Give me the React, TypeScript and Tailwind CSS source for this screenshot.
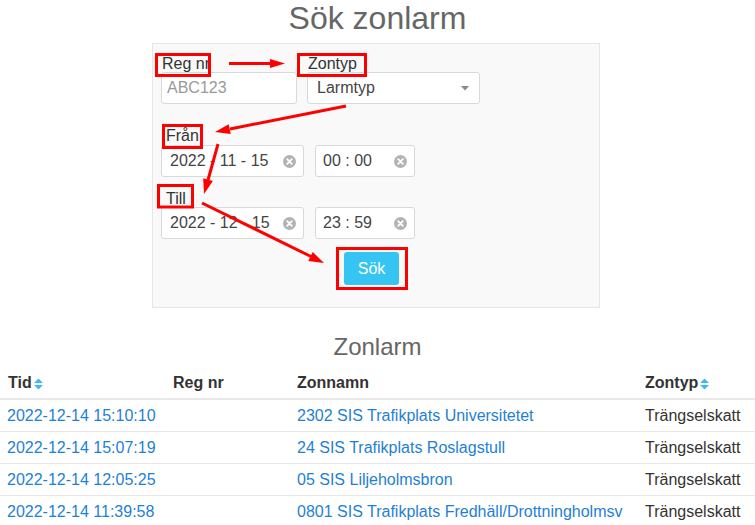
import React from "react";

const ClearIcon = () => (
  <svg width="13" height="13" viewBox="0 0 13 13" className="shrink-0">
    <circle cx="6.5" cy="6.5" r="6.5" fill="#b3b3b3" />
    <path d="M4.2 4.2 L8.8 8.8 M8.8 4.2 L4.2 8.8" stroke="#fff" strokeWidth="1.8" strokeLinecap="round" />
  </svg>
);

const SortIcon = () => (
  <svg width="9" height="12" viewBox="0 0 9 12" className="ml-[2px] inline-block">
    <polygon points="0,5 4.5,0.5 9,5" fill="#40b9ec" />
    <polygon points="0,7 4.5,11.5 9,7" fill="#40b9ec" />
  </svg>
);

const rows = [
  ["2022-12-14 15:10:10", "", "2302 SIS Trafikplats Universitetet", "Trängselskatt"],
  ["2022-12-14 15:07:19", "", "24 SIS Trafikplats Roslagstull", "Trängselskatt"],
  ["2022-12-14 12:05:25", "", "05 SIS Liljeholmsbron", "Trängselskatt"],
  ["2022-12-14 11:39:58", "", "0801 SIS Trafikplats Fredhäll/Drottningholmsv", "Trängselskatt"],
];

const inputBox = "h-[32px] bg-white border border-[#d9d9d9] rounded-[3px] flex items-center";

export default function App() {
  return (
    <div
      className="relative w-[755px] h-[525px] overflow-hidden bg-white text-[16px] text-[#333]"
      style={{ fontFamily: '"Liberation Sans", Arial, sans-serif' }}
    >
      <h1 className="text-center text-[32px] leading-[36px] text-[#666] h-[36px]">Sök zonlarm</h1>

      <div className="ml-[152px] mt-[7px] w-[448px] h-[265px] bg-[#f9f9f9] border border-[#e6e6e6] pl-[8px] pt-[11px]">
        <div className="flex gap-[10px]">
          <div className="w-[136px]">
            <div className="leading-[17px] pl-[1px]">Reg nr</div>
            <div className={inputBox + " pl-[5px]"}>
              <span className="text-[#999]">ABC123</span>
            </div>
          </div>
          <div className="w-[173px]">
            <div className="leading-[17px] pl-[1px]">Zontyp</div>
            <div className={inputBox + " pl-[9px] pr-[10px] justify-between"}>
              <span className="text-[#444]">Larmtyp</span>
              <svg width="8" height="5" viewBox="0 0 8 5">
                <polygon points="0,0 8,0 4,4.5" fill="#888" />
              </svg>
            </div>
          </div>
        </div>

        <div className="leading-[17px] mt-[23px] pl-[5px]">Från</div>
        <div className="flex gap-[11px] mt-[1px]">
          <div className={inputBox + " w-[143px] pl-[8px] pr-[7px] justify-between"}>
            <span className="text-[#444]">2022 - 11 - 15</span>
            <ClearIcon />
          </div>
          <div className={inputBox + " w-[100px] pl-[7px] pr-[7px] justify-between"}>
            <span className="text-[#444]">00 : 00</span>
            <ClearIcon />
          </div>
        </div>

        <div className="leading-[17px] mt-[13px] pl-[5px]">Till</div>
        <div className="flex gap-[11px]">
          <div className={inputBox + " w-[143px] pl-[8px] pr-[7px] justify-between"}>
            <span className="text-[#444]">2022 - 12 - 15</span>
            <ClearIcon />
          </div>
          <div className={inputBox + " w-[100px] pl-[7px] pr-[7px] justify-between"}>
            <span className="text-[#444]">23 : 59</span>
            <ClearIcon />
          </div>
        </div>

        <button className="ml-[183px] mt-[13px] w-[55px] h-[33px] bg-[#36c5f3] text-white rounded-[3px] leading-[18px]">
          Sök
        </button>
      </div>

      <h2 className="text-center text-[24px] leading-[28px] text-[#666] mt-[25px]">Zonlarm</h2>

      <table className="mt-[7px] w-[755px] table-fixed border-collapse">
        <colgroup>
          <col className="w-[165px]" />
          <col className="w-[124px]" />
          <col className="w-[348px]" />
          <col className="w-[118px]" />
        </colgroup>
        <thead>
          <tr className="border-b-2 border-[#e8e8e8]">
            <th className="text-left font-bold px-[8px] py-[6px] leading-[18px]">
              Tid
              <SortIcon />
            </th>
            <th className="text-left font-bold px-[8px] py-[6px] leading-[18px]">Reg nr</th>
            <th className="text-left font-bold px-[8px] py-[6px] leading-[18px]">Zonnamn</th>
            <th className="text-left font-bold px-[8px] py-[6px] leading-[18px] whitespace-nowrap">
              Zontyp
              <SortIcon />
            </th>
          </tr>
        </thead>
        <tbody>
          {rows.map((r, i) => (
            <tr key={i} className="border-b border-[#e8e8e8]">
              <td className="px-[7px] pt-[7px] pb-[6px] leading-[18px] text-[#1f7fd6] whitespace-nowrap">{r[0]}</td>
              <td className="px-[8px] pt-[7px] pb-[6px] leading-[18px]">{r[1]}</td>
              <td className="px-[8px] pt-[7px] pb-[6px] leading-[18px] text-[#1f7fd6] whitespace-nowrap">{r[2]}</td>
              <td className="px-[8px] pt-[7px] pb-[6px] leading-[18px] whitespace-nowrap">{r[3]}</td>
            </tr>
          ))}
        </tbody>
      </table>

      <svg className="absolute left-0 top-0 pointer-events-none" width="755" height="525" viewBox="0 0 755 525">
        <g fill="none" stroke="#ff0000" strokeWidth="3">
          <rect x="156.5" y="54.5" width="53" height="21" />
          <rect x="298.5" y="54.5" width="67" height="21" />
          <rect x="163.5" y="125.5" width="38" height="22" />
          <rect x="158.5" y="185.5" width="34" height="21.5" />
          <rect x="337.5" y="248.5" width="69" height="40" />
          <line x1="229" y1="63.5" x2="272" y2="63.5" />
          <line x1="346" y1="106" x2="230" y2="129" />
          <line x1="218" y1="144" x2="208" y2="180" />
          <line x1="202" y1="203" x2="311" y2="256.5" />
        </g>
        <g fill="#ff0000">
          <polygon points="285,63.5 270,59 270,68" />
          <polygon points="215,132 230.7,134 228.7,124.2" />
          <polygon points="204,194 212.9,180.9 203.2,178.2" />
          <polygon points="324,263 308.3,260.9 312.7,251.9" />
        </g>
      </svg>
    </div>
  );
}
